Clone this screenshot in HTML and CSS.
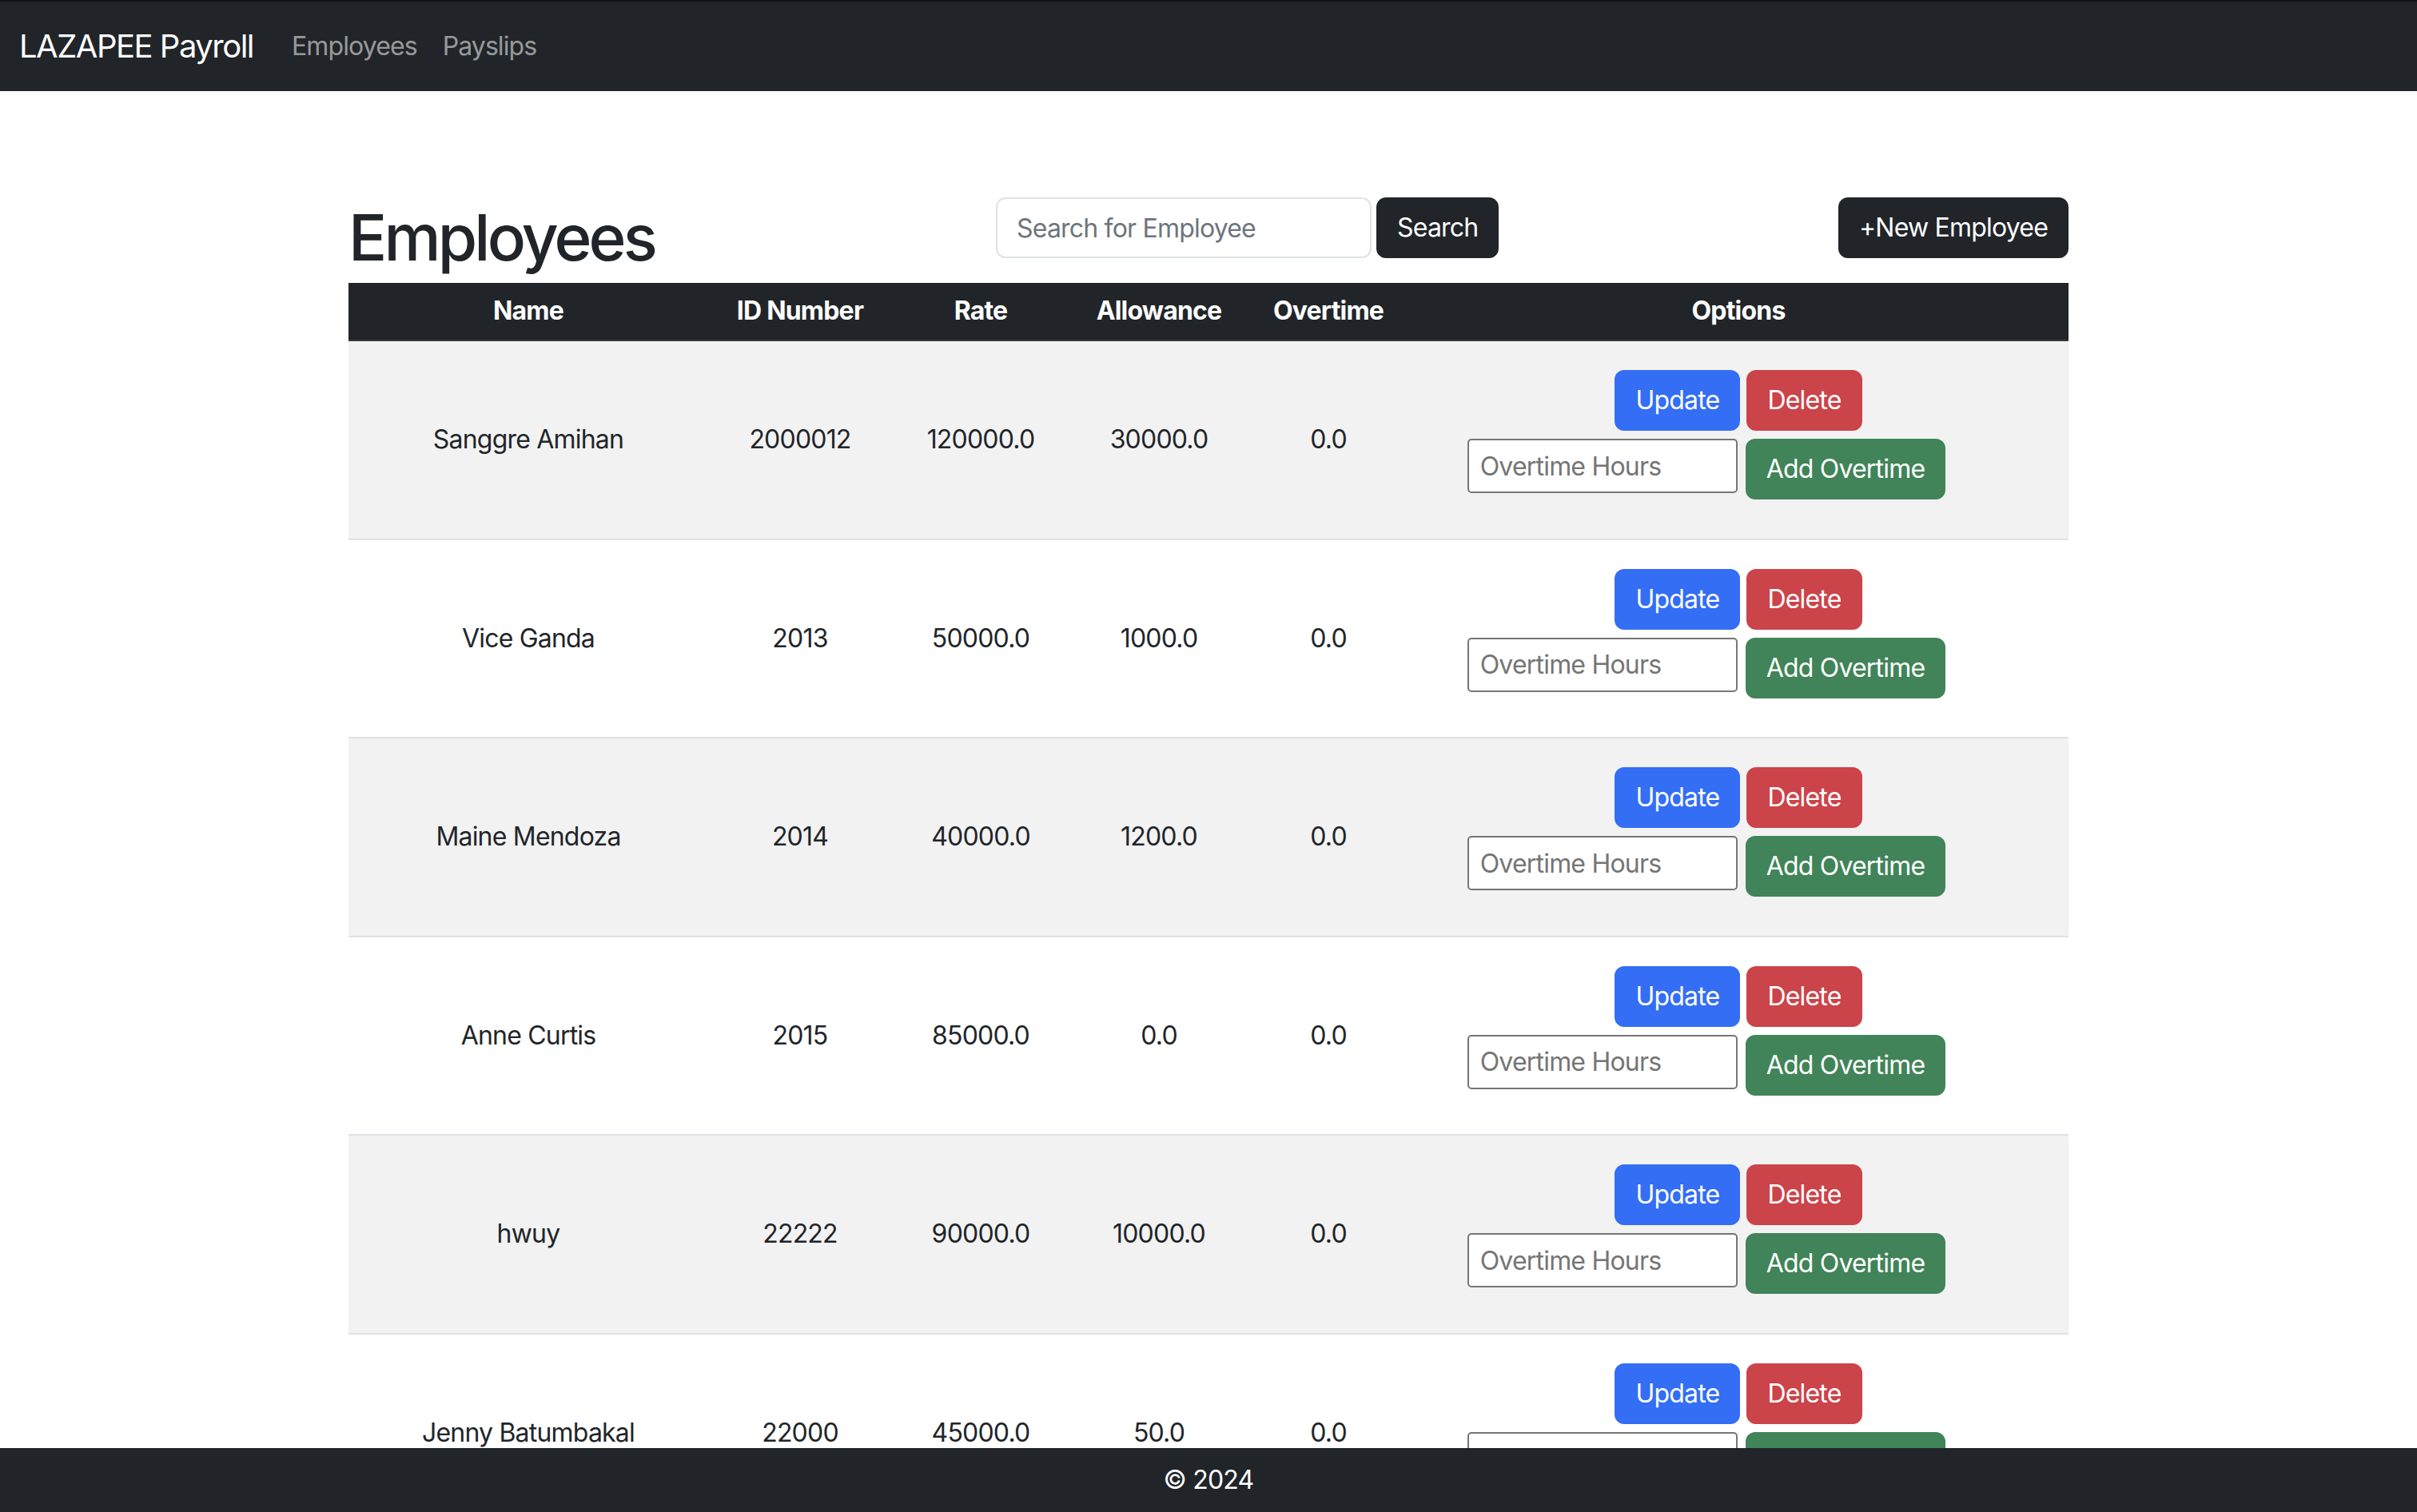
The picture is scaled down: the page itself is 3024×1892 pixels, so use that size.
FILE: index.html
```html
<!DOCTYPE html>
<html lang="en">
<head>
<meta charset="utf-8">
<title>LAZAPEE Payroll</title>
<link rel="stylesheet" href="styles.css">
</head>
<body>
<nav class="navbar">
  <a class="brand" href="#">LAZAPEE Payroll</a>
  <a class="nav-link" href="#">Employees</a>
  <a class="nav-link" href="#">Payslips</a>
</nav>
<main class="main">
  <div class="container">
    <div class="page-head">
      <h1 class="title">Employees</h1>
      <form class="search">
        <input class="search-input" type="text" placeholder="Search for Employee">
        <button class="btn btn-dark" type="button">Search</button>
      </form>
      <button class="btn btn-dark new-btn" type="button">+New Employee</button>
    </div>
    <table class="emp-table">
      <colgroup>
        <col class="c-name"><col class="c-id"><col class="c-rate"><col class="c-allow"><col class="c-ot"><col class="c-opt">
      </colgroup>
      <thead>
        <tr><th>Name</th><th>ID Number</th><th>Rate</th><th>Allowance</th><th>Overtime</th><th>Options</th></tr>
      </thead>
      <tbody>
        <tr class="odd">
          <td>Sanggre Amihan</td><td>2000012</td><td>120000.0</td><td>30000.0</td><td>0.0</td>
          <td class="opts">
            <div class="opt-top"><button class="btn btn-blue" type="button">Update</button><button class="btn btn-red" type="button">Delete</button></div>
            <div class="opt-form"><input class="ot-input" type="text" placeholder="Overtime Hours"><button class="btn btn-green" type="button">Add Overtime</button></div>
          </td>
        </tr>
        <tr>
          <td>Vice Ganda</td><td>2013</td><td>50000.0</td><td>1000.0</td><td>0.0</td>
          <td class="opts">
            <div class="opt-top"><button class="btn btn-blue" type="button">Update</button><button class="btn btn-red" type="button">Delete</button></div>
            <div class="opt-form"><input class="ot-input" type="text" placeholder="Overtime Hours"><button class="btn btn-green" type="button">Add Overtime</button></div>
          </td>
        </tr>
        <tr class="odd">
          <td>Maine Mendoza</td><td>2014</td><td>40000.0</td><td>1200.0</td><td>0.0</td>
          <td class="opts">
            <div class="opt-top"><button class="btn btn-blue" type="button">Update</button><button class="btn btn-red" type="button">Delete</button></div>
            <div class="opt-form"><input class="ot-input" type="text" placeholder="Overtime Hours"><button class="btn btn-green" type="button">Add Overtime</button></div>
          </td>
        </tr>
        <tr>
          <td>Anne Curtis</td><td>2015</td><td>85000.0</td><td>0.0</td><td>0.0</td>
          <td class="opts">
            <div class="opt-top"><button class="btn btn-blue" type="button">Update</button><button class="btn btn-red" type="button">Delete</button></div>
            <div class="opt-form"><input class="ot-input" type="text" placeholder="Overtime Hours"><button class="btn btn-green" type="button">Add Overtime</button></div>
          </td>
        </tr>
        <tr class="odd">
          <td>hwuy</td><td>22222</td><td>90000.0</td><td>10000.0</td><td>0.0</td>
          <td class="opts">
            <div class="opt-top"><button class="btn btn-blue" type="button">Update</button><button class="btn btn-red" type="button">Delete</button></div>
            <div class="opt-form"><input class="ot-input" type="text" placeholder="Overtime Hours"><button class="btn btn-green" type="button">Add Overtime</button></div>
          </td>
        </tr>
        <tr>
          <td>Jenny Batumbakal</td><td>22000</td><td>45000.0</td><td>50.0</td><td>0.0</td>
          <td class="opts">
            <div class="opt-top"><button class="btn btn-blue" type="button">Update</button><button class="btn btn-red" type="button">Delete</button></div>
            <div class="opt-form"><input class="ot-input" type="text" placeholder="Overtime Hours"><button class="btn btn-green" type="button">Add Overtime</button></div>
          </td>
        </tr>
      </tbody>
    </table>
  </div>
</main>
<footer class="footer">© 2024</footer>
</body>
</html>
```

FILE: styles.css
```css
* { box-sizing: border-box; }

html, body {
  margin: 0;
  height: 100%;
}

body {
  display: flex;
  flex-direction: column;
  overflow: hidden;
  font-family: Inter, "Noto Sans", "Liberation Sans", sans-serif;
  font-size: 32px;
  line-height: 48px;
  letter-spacing: -0.8px;
  color: #212529;
  background: #ffffff;
}

.navbar {
  flex: 0 0 auto;
  height: 114px;
  border-top: 2px solid #101214;
  background: #212529;
  display: flex;
  align-items: center;
  padding: 0 24px;
}

.brand {
  color: #ffffff;
  font-size: 40px;
  line-height: 60px;
  text-decoration: none;
  margin-right: 32px;
  letter-spacing: -1.5px;
}

.nav-link {
  color: rgba(255, 255, 255, 0.55);
  text-decoration: none;
  padding: 0 16px;
  font-size: 32px;
  letter-spacing: -0.9px;
}

.main {
  flex: 1 1 auto;
  overflow: hidden;
  padding-top: 134px;
}

.container {
  width: 2152px;
  margin: 0 auto;
}

.page-head {
  display: grid;
  grid-template-columns: 810px auto 1fr auto;
  align-items: start;
  height: 107px;
  margin-top: -1px;
}

.title {
  margin: 2px 0 0 0;
  font-size: 80px;
  line-height: 96px;
  font-weight: 500;
  letter-spacing: -3.8px;
}

.search {
  display: flex;
  gap: 6px;
  margin: 0;
}

.search-input {
  width: 470px;
  height: 76px;
  border: 2px solid #dee2e6;
  border-radius: 12px;
  padding: 0 24px;
  font-family: inherit;
  font-size: 32px;
  letter-spacing: -0.8px;
  color: #212529;
  outline: none;
}

.search-input::placeholder { color: #6c757d; }

.btn {
  font-family: inherit;
  font-size: 32px;
  line-height: 48px;
  height: 76px;
  padding: 0 24px;
  border: 2px solid transparent;
  border-radius: 12px;
  color: #ffffff;
  cursor: pointer;
  letter-spacing: -0.8px;
}

.btn-dark { background: #212529; border-color: #212529; }
.btn-blue { background: #336ef5; border-color: #336ef5; }
.btn-red { background: #cb444a; border-color: #cb444a; }
.btn-green { background: #418459; border-color: #418459; }

.new-btn { grid-column: 4; }

.emp-table {
  width: 2152px;
  border-collapse: collapse;
  table-layout: fixed;
}

.c-name { width: 450px; }
.c-id { width: 230px; }
.c-rate { width: 222px; }
.c-allow { width: 224px; }
.c-ot { width: 200px; }
.c-opt { width: 826px; }

.emp-table th {
  background: #212529;
  color: #ffffff;
  font-weight: 700;
  text-align: center;
  padding: 11px 16px 12px;
  border-bottom: 2px solid #373b3e;
}

.emp-table td {
  text-align: center;
  vertical-align: middle;
  padding: 16px;
  border-bottom: 2px solid #dee2e6;
}

.emp-table tr.odd td { background: #f2f2f2; }

.emp-table td.opts {
  padding: 36px 16px 48.5px;
}

.opt-top {
  display: flex;
  justify-content: center;
  gap: 8px;
}

.opt-form {
  display: flex;
  justify-content: center;
  align-items: flex-start;
  gap: 10px;
  margin-top: 10px;
  padding-right: 80px;
}

.ot-input {
  width: 338px;
  height: 68px;
  border: 2px solid #767676;
  border-radius: 5px;
  padding: 0 14px;
  font-family: inherit;
  font-size: 32px;
  letter-spacing: -0.8px;
  background: #ffffff;
  outline: none;
}

.ot-input::placeholder { color: #757575; }

.footer {
  flex: 0 0 auto;
  height: 80px;
  background: #212529;
  color: #ffffff;
  text-align: center;
  line-height: 80px;
  font-size: 32px;
}
```
